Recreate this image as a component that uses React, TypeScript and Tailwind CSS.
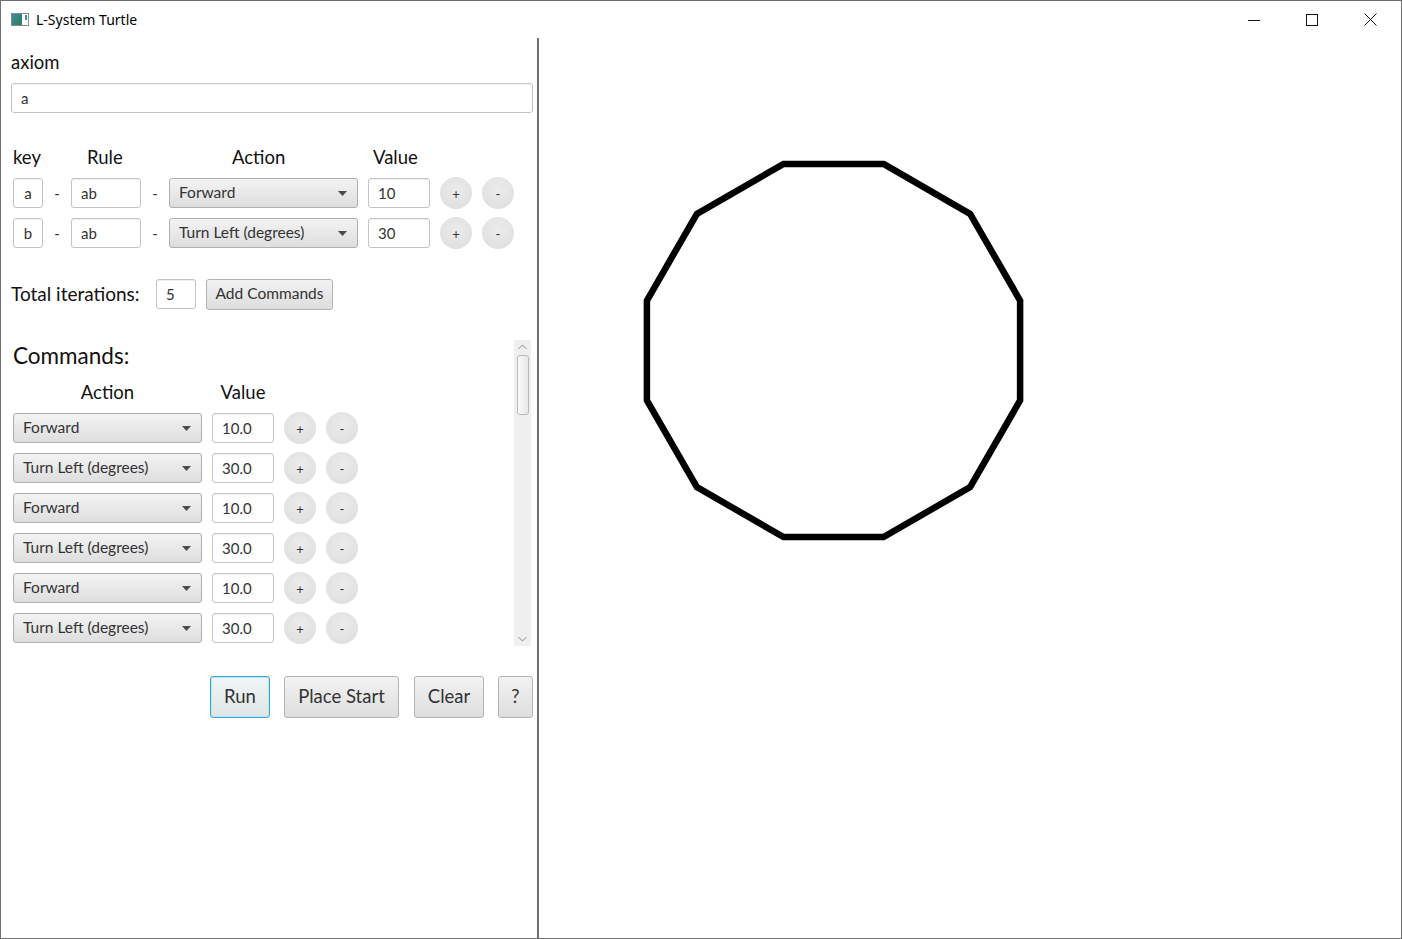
import React from "react";

const FONT = "font-['Lato','Noto_Sans',sans-serif]";

function TextBox({ value, className = "" }: { value: string; className?: string }) {
  return (
    <div
      className={`h-[30px] flex items-center bg-white border border-[#c4c4c4] rounded-[3px] shadow-[inset_0_1px_1px_rgba(0,0,0,0.06)] px-[9px] text-[15px] text-[#333] ${className}`}
    >
      {value}
    </div>
  );
}

function Combo({ value }: { value: string }) {
  return (
    <div className="w-[189px] h-[30px] flex items-center justify-between bg-linear-to-b from-[#f3f3f3] to-[#dedede] border border-[#b0b0b0] rounded-[3px] pl-[9px] pr-[10px] text-[15.5px] text-[#333]">
      <span>{value}</span>
      <svg width="9" height="5" viewBox="0 0 9 5">
        <path d="M0 0 L9 0 L4.5 5 Z" fill="#4a4a4a" />
      </svg>
    </div>
  );
}

function RoundBtn({ label }: { label: string }) {
  return (
    <div className="w-[32px] h-[32px] rounded-full bg-[radial-gradient(circle_at_50%_40%,#ececec,#dcdcdc)] flex items-center justify-center pt-[4px] text-[13px] text-[#333]">
      {label}
    </div>
  );
}

function Btn({ label, focused, className = "" }: { label: string; focused?: boolean; className?: string }) {
  return (
    <div
      className={`h-[42px] flex items-center justify-center rounded-[3px] border text-[18.5px] text-[#333] bg-linear-to-b ${
        focused
          ? "border-[#3aa5d8] from-[#f1f6f9] to-[#dfe4e7] shadow-[inset_0_0_0_1px_#bfe3f3]"
          : "border-[#b3b3b3] from-[#f2f2f2] to-[#dedede]"
      } ${className}`}
    >
      {label}
    </div>
  );
}

function RuleRow({ k, rule, action, value }: { k: string; rule: string; action: string; value: string }) {
  return (
    <div className="flex items-center h-[30px]">
      <TextBox value={k} className="w-[30px] justify-center px-0" />
      <span className="w-[28px] text-center text-[15px] text-[#333]">-</span>
      <TextBox value={rule} className="w-[70px]" />
      <span className="w-[28px] text-center text-[15px] text-[#333]">-</span>
      <Combo value={action} />
      <TextBox value={value} className="w-[62px] ml-[10px]" />
      <div className="ml-[10px] flex gap-[10px]">
        <RoundBtn label="+" />
        <RoundBtn label="-" />
      </div>
    </div>
  );
}

function CommandRow({ action, value }: { action: string; value: string }) {
  return (
    <div className="flex items-center h-[30px]">
      <Combo value={action} />
      <TextBox value={value} className="w-[62px] ml-[10px]" />
      <div className="ml-[10px] flex gap-[10px]">
        <RoundBtn label="+" />
        <RoundBtn label="-" />
      </div>
    </div>
  );
}

const commands = [
  ["Forward", "10.0"],
  ["Turn Left (degrees)", "30.0"],
  ["Forward", "10.0"],
  ["Turn Left (degrees)", "30.0"],
  ["Forward", "10.0"],
  ["Turn Left (degrees)", "30.0"],
];

// regular dodecagon, page coordinates
const cx = 833.5;
const cy = 350.5;
const R = 193.2;
const points = Array.from({ length: 12 }, (_, i) => {
  const a = ((15 + i * 30) * Math.PI) / 180;
  return `${(cx + R * Math.sin(a)).toFixed(1)},${(cy - R * Math.cos(a)).toFixed(1)}`;
}).join(" ");

export default function App() {
  return (
    <div className={`w-[1402px] h-[939px] bg-white border border-[#707070] flex flex-col ${FONT}`}>
      {/* title bar */}
      <div className="h-[37px] flex items-center shrink-0">
        <div className="ml-[10px] w-[18px] h-[13px] border border-[#8a8a8a] flex bg-white">
          <div className="w-[10px] h-full bg-linear-to-br from-[#3a8fa0] to-[#2e7d5a]" />
          <div className="ml-[3px] mt-[1px] w-[2px] h-[5px] bg-[#3a8fa0]" />
        </div>
        <span className="ml-[7px] text-[14px] text-black font-['Noto_Sans',sans-serif]">L-System Turtle</span>
        <div className="ml-auto flex items-center h-full">
          <div className="w-[58px] h-full flex items-center justify-center">
            <svg width="12" height="12" viewBox="0 0 12 12">
              <path d="M0 6.5 H12" stroke="#111" strokeWidth="1" />
            </svg>
          </div>
          <div className="w-[58px] h-full flex items-center justify-center">
            <svg width="12" height="12" viewBox="0 0 12 12">
              <rect x="0.5" y="0.5" width="11" height="11" fill="none" stroke="#111" strokeWidth="1" />
            </svg>
          </div>
          <div className="w-[58px] h-full flex items-center justify-center mr-[2px]">
            <svg width="13" height="13" viewBox="0 0 13 13">
              <path d="M0.5 0.5 L12.5 12.5 M12.5 0.5 L0.5 12.5" stroke="#111" strokeWidth="1" />
            </svg>
          </div>
        </div>
      </div>

      <div className="flex flex-1 min-h-0">
        {/* left panel */}
        <div className="w-[538px] shrink-0 border-r-2 border-[#6f6f6f] pl-[10px] pr-[4px] flex flex-col">
          <div className="mt-[12px] h-[24px] leading-[24px] text-[18.5px] text-[#111]">axiom</div>
          <TextBox value="a" className="mt-[9px] w-[522px]" />

          <div className="mt-[32px] pl-[2px] flex h-[24px] leading-[24px] text-[18.5px] text-[#111]">
            <span className="w-[74px]">key</span>
            <span className="w-[145px]">Rule</span>
            <span className="w-[141px]">Action</span>
            <span>Value</span>
          </div>
          <div className="mt-[9px] pl-[2px] flex flex-col gap-[10px]">
            <RuleRow k="a" rule="ab" action="Forward" value="10" />
            <RuleRow k="b" rule="ab" action="Turn Left (degrees)" value="30" />
          </div>

          <div className="mt-[31px] flex items-center h-[30px]">
            <span className="text-[19px] text-[#111] w-[145px]">Total iterations:</span>
            <TextBox value="5" className="w-[40px]" />
            <div className="ml-[10px] h-[31px] w-[127px] justify-center flex items-center rounded-[3px] border border-[#b3b3b3] bg-linear-to-b from-[#f2f2f2] to-[#dedede] text-[15.5px] text-[#333]">
              Add Commands
            </div>
          </div>

          {/* scroll pane */}
          <div className="mt-[31px] h-[306px] flex">
            <div className="flex-1 pl-[2px] pt-[2px] overflow-hidden">
              <div className="h-[28px] leading-[28px] text-[22.5px] text-[#111]">Commands:</div>
              <div className="mt-[10px] flex h-[24px] leading-[24px] text-[18.5px] text-[#111]">
                <span className="w-[189px] text-center">Action</span>
                <span className="ml-[10px] w-[62px] text-center">Value</span>
              </div>
              <div className="mt-[9px] flex flex-col gap-[10px]">
                {commands.map(([a, v], i) => (
                  <CommandRow key={i} action={a} value={v} />
                ))}
              </div>
            </div>
            <div className="w-[17px] h-full bg-[#efefef] flex flex-col items-center mr-[2px]">
              <svg className="mt-[4px]" width="9" height="6" viewBox="0 0 9 6">
                <path d="M0.5 5 L4.5 1 L8.5 5" fill="none" stroke="#8a8a8a" strokeWidth="1" />
              </svg>
              <div className="mt-[5px] w-[12px] h-[60px] rounded-[3px] border border-[#b9b9b9] bg-linear-to-r from-[#fafafa] to-[#e8e8e8]" />
              <div className="flex-1" />
              <svg className="mb-[4px]" width="9" height="6" viewBox="0 0 9 6">
                <path d="M0.5 1 L4.5 5 L8.5 1" fill="none" stroke="#8a8a8a" strokeWidth="1" />
              </svg>
            </div>
          </div>

          <div className="mt-[30px] flex justify-end gap-[14px]">
            <Btn label="Run" focused className="w-[60px]" />
            <Btn label="Place Start" className="w-[115px]" />
            <Btn label="Clear" className="w-[70px] ml-[1px]" />
            <Btn label="?" className="w-[35px]" />
          </div>
        </div>

        {/* canvas */}
        <div className="flex-1 relative bg-white">
          <svg className="absolute inset-0 w-full h-full" viewBox="539 38 861 900" preserveAspectRatio="xMinYMin meet">
            <polygon points={points} fill="none" stroke="#000" strokeWidth="6.5" strokeLinejoin="miter" />
          </svg>
        </div>
      </div>
    </div>
  );
}
